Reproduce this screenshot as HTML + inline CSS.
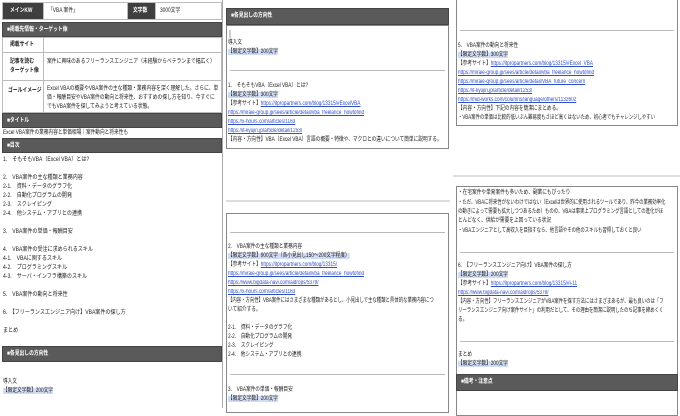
<!DOCTYPE html>
<html><head><meta charset="utf-8"><style>
*{margin:0;padding:0;box-sizing:border-box}
body{width:680px;height:408px;overflow:hidden;background:#fff;font-family:"Liberation Sans","Noto Sans CJK JP",sans-serif;font-size:6px;color:#222;position:relative}
.a{position:absolute}
.l{position:absolute;white-space:nowrap;line-height:8px;transform:scaleX(.78);transform-origin:0 0}
.t{transform:scaleX(.84)}
.n{transform:scaleX(.73)}
.d{background:#3f3f3f;color:#fff;font-weight:bold}
.h{position:absolute;background:#5a5a5a;color:#fff;font-weight:bold;line-height:15px;padding-left:4px;border:1px solid #444}
.c{position:absolute;border:1px solid #bbb}
.hl{background:#cfdcf3}
.k{color:#2f4fc9;text-decoration:underline}
.hr{position:absolute;height:1px;background:#bbb}
.box{position:absolute;border:1px solid #888;background:#fff}
.s{transform:scaleX(.8);transform-origin:0 0;white-space:nowrap}
.w{transform:scaleX(.8);transform-origin:0 0;width:215px}
</style></head><body>
<div class="a" style="left:0;top:0;width:223px;height:408px;border-right:1px solid #aaa"></div>
<div class="c d" style="left:2px;top:2px;width:42px;height:18px;line-height:16px;padding-left:7px"><div class="s">メインKW</div></div>
<div class="c" style="left:43px;top:2px;width:85px;height:18px;line-height:16px;padding-left:4px"><div class="s">「VBA 案件」</div></div>
<div class="c d" style="left:127px;top:2px;width:29px;height:18px;line-height:16px;padding-left:5px"><div class="s">文字数</div></div>
<div class="c" style="left:155px;top:2px;width:67px;height:18px;line-height:16px;padding-left:4px"><div class="s">3000文字</div></div>
<div class="h" style="left:2px;top:22px;width:220px;height:15px"><div class="s">■掲載先情報・ターゲット像</div></div>
<div class="c" style="left:2px;top:37px;width:42px;height:16px;line-height:14px;padding-left:7px;font-weight:bold"><div class="s">掲載サイト</div></div>
<div class="c" style="left:43px;top:37px;width:179px;height:16px"></div>
<div class="c" style="left:2px;top:52px;width:42px;height:29px;line-height:9px;padding:5px 0 0 7px;font-weight:bold"><div class="s">記事を読む<br>ターゲット像</div></div>
<div class="c" style="left:43px;top:52px;width:179px;height:29px;padding:5px 3px;line-height:9px"><div class="s">案件に興味のあるフリーランスエンジニア（未経験からベテランまで幅広く）</div></div>
<div class="c" style="left:2px;top:80px;width:42px;height:33px;padding:4px 0 0 5px;font-weight:bold"><div class="s">ゴールイメージ</div></div>
<div class="c" style="left:43px;top:80px;width:179px;height:33px;padding:4px 3px;line-height:9px"><div class="w">Excel VBAの概要やVBA案件の主な種類・業務内容を深く理解した。さらに、単価・報酬目安やVBA案件の動向と将来性、おすすめの探し方を知り、今すぐにでもVBA案件を探してみようと考えている状態。</div></div>
<div class="h" style="left:2px;top:113px;width:220px;height:15px"><div class="s">■タイトル</div></div>
<div class="l" style="left:3px;top:129px">Excel VBA案件の業務内容と単価相場｜案件動向と将来性も</div>
<div class="h" style="left:2px;top:138px;width:220px;height:15px"><div class="s">■目次</div></div>
<div class="l t" style="left:3px;top:156px">1.　そもそもVBA（Excel VBA）とは?</div>
<div class="l t" style="left:3px;top:174px">2.　VBA案件の主な種類と業務内容</div>
<div class="l t" style="left:3px;top:183px">2-1.　資料・データのグラフ化</div>
<div class="l t" style="left:3px;top:192px">2-2.　自動化プログラムの開発</div>
<div class="l t" style="left:3px;top:201px">2-3.　スクレイピング</div>
<div class="l t" style="left:3px;top:210px">2-4.　他システム・アプリとの連携</div>
<div class="l t" style="left:3px;top:228px">3.　VBA案件の単価・報酬目安</div>
<div class="l t" style="left:3px;top:246px">4.　VBA案件の受注に求められるスキル</div>
<div class="l t" style="left:3px;top:255px">4-1.　VBAに関するスキル</div>
<div class="l t" style="left:3px;top:264px">4-2.　プログラミングスキル</div>
<div class="l t" style="left:3px;top:273px">4-3.　サーバ・インフラ構築のスキル</div>
<div class="l t" style="left:3px;top:291px">5.　VBA案件の動向と将来性</div>
<div class="l t" style="left:3px;top:309px">6.　【フリーランスエンジニア向け】VBA案件の探し方</div>
<div class="l t" style="left:3px;top:327px">まとめ</div>
<div class="h" style="left:2px;top:346px;width:220px;height:16px"><div class="s">■各見出しの方向性</div></div>
<div class="l" style="left:3px;top:378px">導入文</div>
<div class="l" style="left:3px;top:387px"><span class="hl">【限定文字数】200文字</span></div>

<div class="h" style="left:226px;top:8px;width:223px;height:17px;line-height:15px"><div class="s">■各見出しの方向性</div></div>
<div class="box" style="left:226px;top:25px;width:223px;height:124px"></div>
<div class="a" style="left:229px;top:30px;width:2px;height:8px;background:#ccc"></div>
<div class="l" style="left:228px;top:39px">導入文</div>
<div class="l" style="left:228px;top:48px"><span class="hl">【限定文字数】200文字</span></div>
<div class="hr" style="left:230px;top:70px;width:215px"></div>
<div class="l" style="left:228px;top:82px">1.　そもそもVBA（Excel VBA）とは?</div>
<div class="l" style="left:228px;top:91px"><span class="hl">【限定文字数】300文字</span></div>
<div class="l" style="left:228px;top:100px">【参考サイト】<span class="k">https://itpropartners.com/blog/13315/#ExcelVBA</span></div>
<div class="l" style="left:228px;top:109px"><span class="k">https://miraie-group.jp/sees/article/detail/vba_freelance_howtofind</span></div>
<div class="l" style="left:228px;top:118px"><span class="k">https://x-hours.com/articles/1163</span></div>
<div class="l" style="left:228px;top:127px"><span class="k">https://it-kyujin.jp/article/detail/1253/</span></div>
<div class="l" style="left:228px;top:136px">【内容・方向性】VBA（Excel VBA）言語の概要・特徴や、マクロとの違いについて簡単に説明する。</div>
<div class="hr" style="left:226px;top:200px;width:224px;background:#ddd;height:2px"></div>
<div class="box" style="left:226px;top:213px;width:223px;height:200px"></div>
<div class="hr" style="left:230px;top:232px;width:215px"></div>
<div class="l" style="left:228px;top:243px">2.　VBA案件の主な種類と業務内容</div>
<div class="l" style="left:228px;top:252px"><span class="hl">【限定文字数】900文字（各小見出し150～200文字程度）</span></div>
<div class="l" style="left:228px;top:261px">【参考サイト】<span class="k">https://itpropartners.com/blog/13315/</span></div>
<div class="l" style="left:228px;top:270px"><span class="k">https://miraie-group.jp/sees/article/detail/vba_freelance_howtofind</span></div>
<div class="l" style="left:228px;top:279px"><span class="k">https://www.bigdata-navi.com/aidrops/5379/</span></div>
<div class="l" style="left:228px;top:288px"><span class="k">https://x-hours.com/articles/1163</span></div>
<div class="l n" style="left:228px;top:297px">【内容・方向性】VBA案件にはさまざまな種類があるとし、小見出しで主な種類と具体的な業務内容につ</div>
<div class="l" style="left:228px;top:306px">いて紹介する。</div>
<div class="l" style="left:228px;top:324px">2-1.　資料・データのグラフ化</div>
<div class="l" style="left:228px;top:333px">2-2.　自動化プログラムの開発</div>
<div class="l" style="left:228px;top:342px">2-3.　スクレイピング</div>
<div class="l" style="left:228px;top:351px">2-4.　他システム・アプリとの連携</div>
<div class="hr" style="left:230px;top:374px;width:215px"></div>
<div class="l" style="left:228px;top:386px">3.　VBA案件の単価・報酬目安</div>
<div class="l" style="left:228px;top:395px"><span class="hl">【限定文字数】200文字</span></div>

<div class="box" style="left:456px;top:-2px;width:222px;height:128px"></div>
<div class="hr" style="left:460px;top:30px;width:214px"></div>
<div class="l" style="left:458px;top:42px">5.　VBA案件の動向と将来性</div>
<div class="l" style="left:458px;top:51px"><span class="hl">【限定文字数】300文字</span></div>
<div class="l" style="left:458px;top:60px">【参考サイト】<span class="k">https://itpropartners.com/blog/13315/#Excel_VBA</span></div>
<div class="l" style="left:458px;top:69px"><span class="k">https://miraie-group.jp/sees/article/detail/vba_freelance_howtofind</span></div>
<div class="l" style="left:458px;top:78px"><span class="k">https://miraie-group.jp/sees/article/detail/VBA_future_concern</span></div>
<div class="l" style="left:458px;top:87px"><span class="k">https://it-kyujin.jp/article/detail/1253/</span></div>
<div class="l" style="left:458px;top:96px"><span class="k">https://mid-works.com/columns/language/others/1132602</span></div>
<div class="l" style="left:458px;top:105px">【内容・方向性】下記の内容を簡潔にまとめる。</div>
<div class="l n" style="left:458px;top:114px">・VBA案件の単価は比較的低いぶん難易度もさほど高くはないため、初心者でもチャレンジしやすい</div>
<div class="hr" style="left:453px;top:175px;width:227px;background:#ddd;height:2px"></div>
<div class="box" style="left:456px;top:186px;width:222px;height:230px"></div>
<div class="l" style="left:458px;top:189px">・在宅案件や単発案件も多いため、副業にもぴったり</div>
<div class="l n" style="left:458px;top:199px">・ただ、VBAに将来性がないわけではない（Excelは世界的に使用されるツールであり、昨今の業務効率化</div>
<div class="l n" style="left:458px;top:208px">の動きによって需要も拡大しつつあるため）ものの、VBAは事実上プログラミング言語としての進化がほ</div>
<div class="l" style="left:458px;top:217px">とんどなく、供給が需要を上回っている状況</div>
<div class="l n" style="left:458px;top:227px">・VBAエンジニアとして高収入を目指すなら、他言語やその他のスキルも習得しておくと良い</div>
<div class="hr" style="left:460px;top:252px;width:214px"></div>
<div class="l" style="left:458px;top:262px">6.　【フリーランスエンジニア向け】VBA案件の探し方</div>
<div class="l" style="left:458px;top:271px"><span class="hl">【限定文字数】200文字</span></div>
<div class="l" style="left:458px;top:280px">【参考サイト】<span class="k">https://itpropartners.com/blog/13315/#i-11</span></div>
<div class="l" style="left:458px;top:289px"><span class="k">https://www.bigdata-navi.com/aidrops/5379/</span></div>
<div class="l n" style="left:458px;top:298px">【内容・方向性】フリーランスエンジニアがVBA案件を探す方法にはさまざまあるが、最も良いのは「フ</div>
<div class="l n" style="left:458px;top:307px">リーランスエンジニア向け案件サイト」の利用だとして、その理由を簡潔に説明したのち記事を締めくく</div>
<div class="l" style="left:458px;top:316px">る。</div>
<div class="hr" style="left:460px;top:341px;width:214px"></div>
<div class="l" style="left:458px;top:351px">まとめ</div>
<div class="l" style="left:458px;top:360px"><span class="hl">【限定文字数】200文字</span></div>
<div class="h" style="left:456px;top:374px;width:222px;height:17px;line-height:15px"><div class="s">■備考・注意点</div></div>
</body></html>
